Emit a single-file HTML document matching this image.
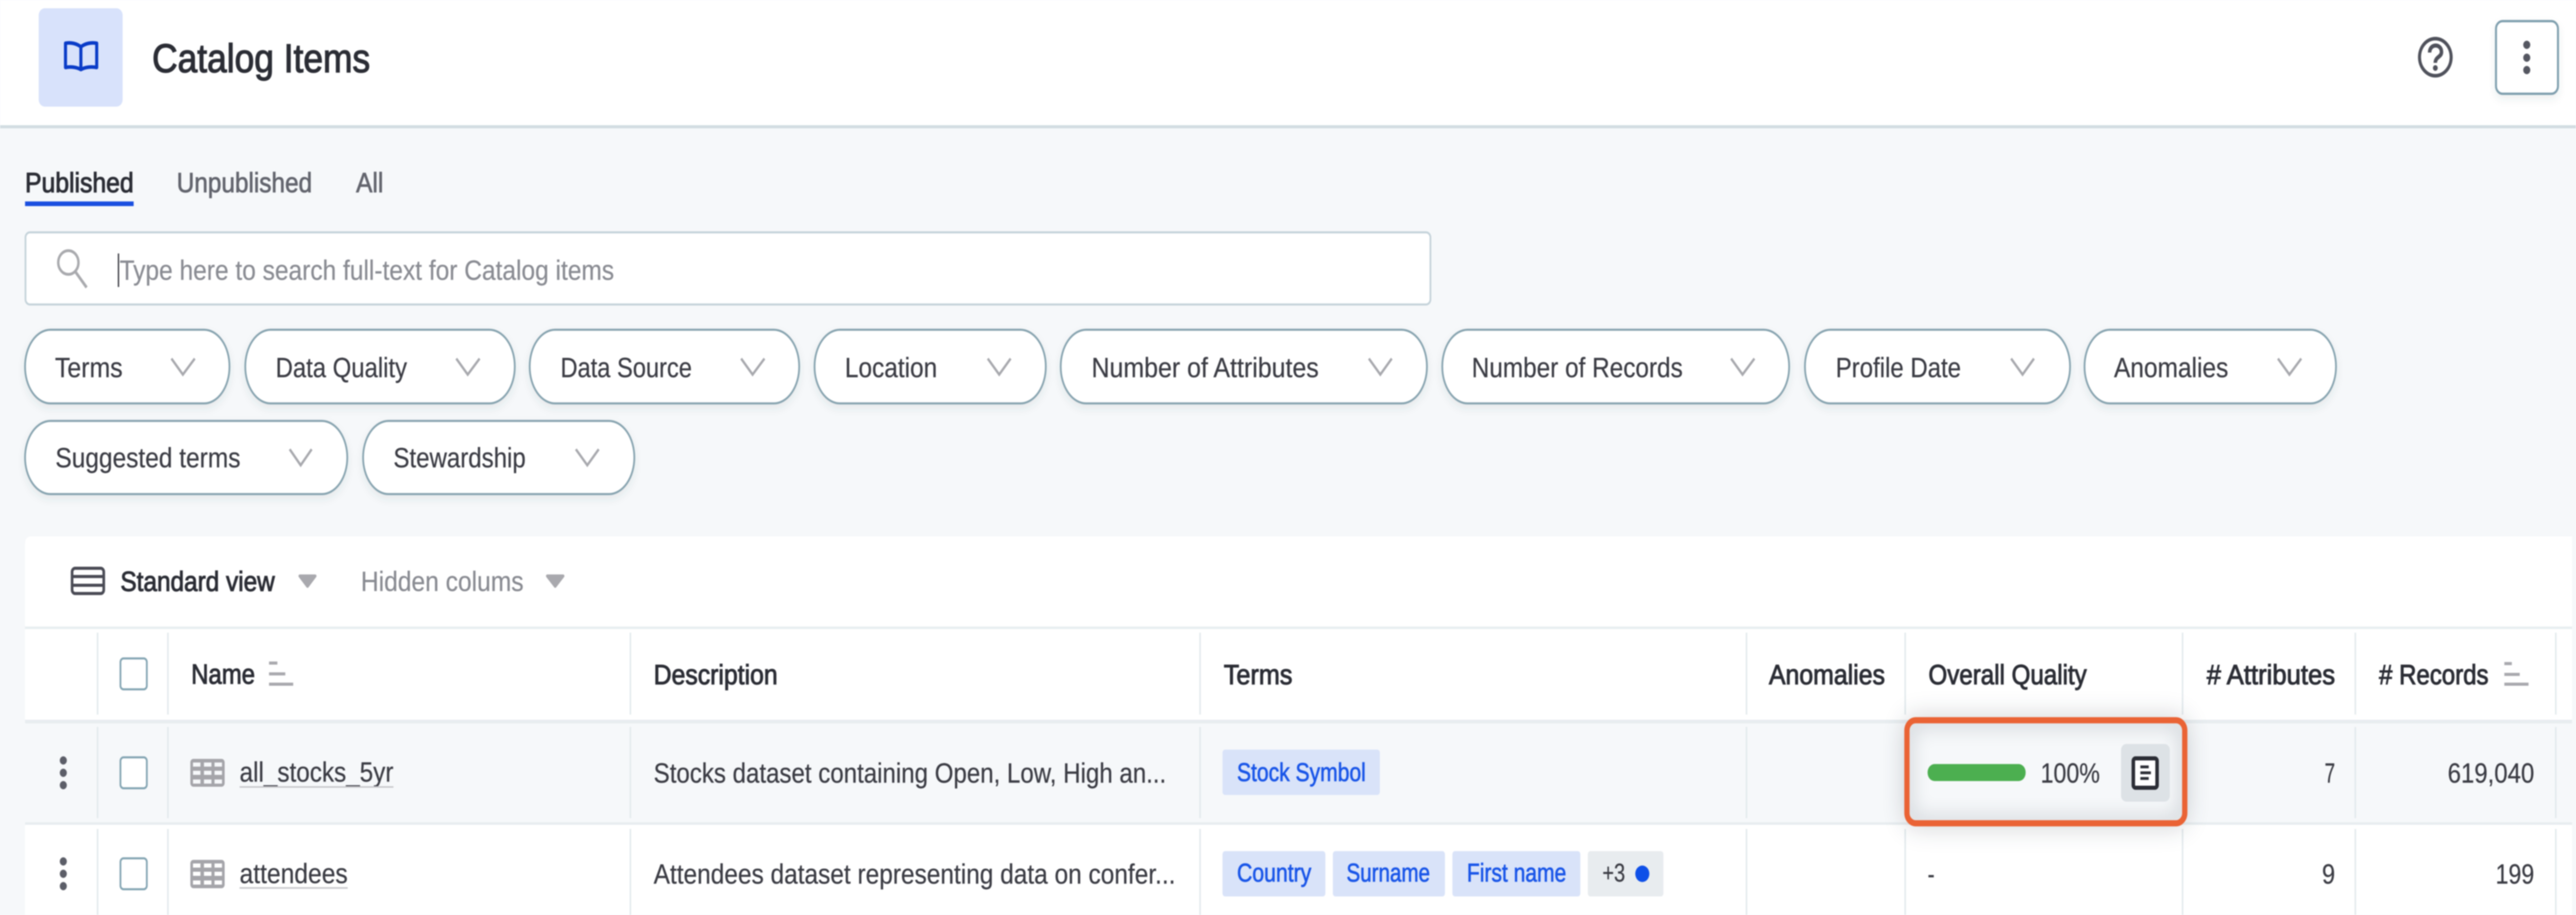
<!DOCTYPE html>
<html lang="en">
<head>
<meta charset="utf-8">
<title>Catalog Items</title>
<style>
html,body{margin:0;padding:0;background:#f6f8fa;width:100%;height:100%;overflow:hidden;}
svg#root{position:fixed;left:0;top:0;width:100vw;height:100vh;display:block;filter:blur(1px);}
text{font-family:"Liberation Sans",sans-serif;font-size:54px;fill:#3b3c44;stroke:#3b3c44;stroke-width:.4px;text-rendering:geometricPrecision;}
.m{stroke:#2b2d35;stroke-width:1.6px;fill:#2b2d35;}
.g{fill:#63656e;stroke:#63656e;stroke-width:1.2px;}
.c{font-size:50px;fill:#1a56e8;stroke:#1a56e8;stroke-width:1.1px;}
.p{fill:#fff;stroke:#88a4b0;stroke-width:4;}
.v{fill:none;stroke:#a8a9ae;stroke-width:5;}
.s{stroke:#e3eaed;stroke-width:3.5;}
.b{fill:#a9a9ae;}
</style>
</head>
<body>
<svg id="root" viewBox="0 0 5860 1776" preserveAspectRatio="none" xmlns="http://www.w3.org/2000/svg">
<defs>
<filter id="sh" x="-10%" y="-30%" width="120%" height="170%"><feDropShadow dx="0" dy="8" stdDeviation="8" flood-color="#3a4a55" flood-opacity=".09"/></filter>
<filter id="bl" x="-30%" y="-60%" width="160%" height="220%"><feGaussianBlur stdDeviation="26"/></filter>
<filter id="bi" x="-30%" y="-60%" width="160%" height="220%"><feGaussianBlur stdDeviation="20"/></filter>
<clipPath id="inner"><rect x="4344" y="1404" width="620" height="188" rx="14"/></clipPath>
</defs>
<rect x="0" y="0" width="5860" height="1776" fill="#f6f8fa"/>
<!-- header -->
<rect x="0" y="0" width="5860" height="243" fill="#fff"/>
<rect x="0" y="243" width="5860" height="6" fill="#d2dde2"/>
<rect x="88" y="16" width="191" height="191" rx="14" fill="#d8e2fb"/>
<path d="M184 91C174 84 160 82 149 84V131C160 129 174 130 184 135C194 130 208 129 220 131V84C208 82 194 84 184 91ZM184 91V135" fill="none" stroke="#0a3cc8" stroke-width="7" stroke-linejoin="round"/>
<text x="346" y="140" textLength="496" lengthAdjust="spacingAndGlyphs" class="m" style="font-size:78px;stroke-width:2px">Catalog Items</text>
<circle cx="5540" cy="111" r="36" fill="none" stroke="#50525c" stroke-width="7"/>
<path d="M5527 102C5527 84 5554 84 5554 101C5554 111 5540 110 5540 122" fill="none" stroke="#50525c" stroke-width="8"/>
<circle cx="5540" cy="132" r="5.5" fill="#50525c"/>
<rect x="5678" y="41" width="141" height="141" rx="15" fill="#fff" stroke="#7f9fae" stroke-width="4.5" filter="url(#sh)"/>
<circle cx="5748" cy="87" r="8" fill="#555761"/><circle cx="5748" cy="112" r="8" fill="#555761"/><circle cx="5748" cy="136" r="8" fill="#555761"/>
<!-- tabs -->
<text x="57" y="373" textLength="247" lengthAdjust="spacingAndGlyphs" class="m">Published</text>
<rect x="57" y="391" width="247" height="9" fill="#1a4fe0"/>
<text x="402" y="373" textLength="308" lengthAdjust="spacingAndGlyphs" class="g">Unpublished</text>
<text x="810" y="373" textLength="62" lengthAdjust="spacingAndGlyphs" class="g">All</text>
<!-- search -->
<rect x="58" y="451" width="3196" height="140" rx="10" fill="#fff" stroke="#c5d3da" stroke-width="4"/>
<circle cx="155.500" cy="509.500" r="23" fill="none" stroke="#a9aaae" stroke-width="5.500"/>
<path d="M172 528L197 558" stroke="#a9aaae" stroke-width="6" fill="none"/>
<rect x="268" y="492" width="3" height="65" fill="#33343c"/>
<text x="272" y="543" textLength="1125" lengthAdjust="spacingAndGlyphs" style="fill:#8a8c93;stroke:#8a8c93">Type here to search full-text for Catalog items</text>
<!-- pills -->
<g filter="url(#sh)">
<rect class="p" x="57" y="640" width="465" height="143" rx="58" ry="71"/>
<rect class="p" x="558" y="640" width="613" height="143" rx="58" ry="71"/>
<rect class="p" x="1205" y="640" width="613" height="143" rx="58" ry="71"/>
<rect class="p" x="1853" y="640" width="526" height="143" rx="58" ry="71"/>
<rect class="p" x="2413" y="640" width="833" height="143" rx="58" ry="71"/>
<rect class="p" x="3281" y="640" width="789" height="143" rx="58" ry="71"/>
<rect class="p" x="4106" y="640" width="603" height="143" rx="58" ry="71"/>
<rect class="p" x="4742" y="640" width="572" height="143" rx="58" ry="71"/>
<rect class="p" x="57" y="817" width="733" height="142" rx="58" ry="71"/>
<rect class="p" x="826" y="817" width="617" height="142" rx="58" ry="71"/>
</g>
<text x="125" y="732" textLength="154" lengthAdjust="spacingAndGlyphs">Terms</text>
<text x="627" y="732" textLength="299" lengthAdjust="spacingAndGlyphs">Data Quality</text>
<text x="1275" y="732" textLength="299" lengthAdjust="spacingAndGlyphs">Data Source</text>
<text x="1922" y="732" textLength="210" lengthAdjust="spacingAndGlyphs">Location</text>
<text x="2483" y="732" textLength="517" lengthAdjust="spacingAndGlyphs">Number of Attributes</text>
<text x="3348" y="732" textLength="480" lengthAdjust="spacingAndGlyphs">Number of Records</text>
<text x="4176" y="732" textLength="285" lengthAdjust="spacingAndGlyphs">Profile Date</text>
<text x="4809" y="732" textLength="260" lengthAdjust="spacingAndGlyphs">Anomalies</text>
<text x="126" y="907" textLength="421" lengthAdjust="spacingAndGlyphs">Suggested terms</text>
<text x="895" y="907" textLength="301" lengthAdjust="spacingAndGlyphs">Stewardship</text>
<polyline class="v" points="390,696 416,727 443,696"/>
<polyline class="v" points="1038,696 1064,727 1091,696"/>
<polyline class="v" points="1686,696 1712,727 1739,696"/>
<polyline class="v" points="2247,696 2273,727 2299,696"/>
<polyline class="v" points="3114,696 3140,727 3166,696"/>
<polyline class="v" points="3938,696 3964,727 3991,696"/>
<polyline class="v" points="4575,696 4601,727 4627,696"/>
<polyline class="v" points="5182,696 5208,727 5235,696"/>
<polyline class="v" points="659,872 684,903 709,872"/>
<polyline class="v" points="1310,872 1336,903 1362,872"/>
<!-- card -->
<path d="M57 1776V1056Q57 1041 72 1041H5851V1776Z" fill="#fff"/>
<rect x="164" y="1103" width="72" height="49" rx="7" fill="none" stroke="#4a4b55" stroke-width="6"/>
<path d="M164 1119H236M164 1136H236" stroke="#4a4b55" stroke-width="6"/>
<text x="274" y="1147" textLength="351" lengthAdjust="spacingAndGlyphs" class="m">Standard view</text>
<path d="M682 1118H717L699.500 1138Z" fill="#a9a9ae" stroke="#a9a9ae" stroke-width="6" stroke-linejoin="round"/>
<text x="821" y="1147" textLength="370" lengthAdjust="spacingAndGlyphs" style="fill:#898b92;stroke:#898b92">Hidden colums</text>
<path d="M1245 1118H1281L1263 1138Z" fill="#a9a9ae" stroke="#a9a9ae" stroke-width="6" stroke-linejoin="round"/>
<rect x="57" y="1216" width="5794" height="5" fill="#e8eef1"/>
<rect x="57" y="1404" width="5794" height="192" fill="#f6f8fa"/>
<rect x="57" y="1397" width="5794" height="7" fill="#e8edf0"/>
<rect x="57" y="1596" width="5794" height="5" fill="#e8edf0"/>
<!-- separators -->
<g class="s">
<path d="M222 1228V1387M382 1228V1387M1434 1228V1387M2730 1228V1387M3973 1228V1387M4334 1228V1387M4965 1228V1387M5358 1228V1387M5814 1228V1387"/>
<path d="M222 1411V1588M382 1411V1588M1434 1411V1588M2730 1411V1588M3973 1411V1588M5358 1411V1588M5814 1411V1588"/>
<path d="M222 1609V1776M382 1609V1776M1434 1609V1776M2730 1609V1776M3973 1609V1776M4334 1609V1776M4965 1609V1776M5358 1609V1776M5814 1609V1776"/>
</g>
<!-- table header -->
<rect x="274" y="1278" width="60" height="60" rx="7" fill="#fff" stroke="#84a5b3" stroke-width="4"/>
<text x="435" y="1327" textLength="145" lengthAdjust="spacingAndGlyphs" class="m">Name</text>
<rect class="b" x="612" y="1284" width="19" height="6"/><rect class="b" x="612" y="1305" width="37" height="6"/><rect class="b" x="612" y="1325" width="55" height="6"/>
<text x="1487" y="1328" textLength="282" lengthAdjust="spacingAndGlyphs" class="m">Description</text>
<text x="2784" y="1328" textLength="156" lengthAdjust="spacingAndGlyphs" class="m">Terms</text>
<text x="4024" y="1328" textLength="264" lengthAdjust="spacingAndGlyphs" class="m">Anomalies</text>
<text x="5020" y="1328" textLength="292" lengthAdjust="spacingAndGlyphs" class="m"># Attributes</text>
<text x="5412" y="1328" textLength="249" lengthAdjust="spacingAndGlyphs" class="m"># Records</text>
<rect class="b" x="5697" y="1285" width="17" height="6"/><rect class="b" x="5697" y="1306" width="35" height="6"/><rect class="b" x="5697" y="1325" width="55" height="6"/>
<!-- row 1 -->
<circle cx="144" cy="1476" r="8" fill="#5c5e68"/><circle cx="144" cy="1500" r="8" fill="#5c5e68"/><circle cx="144" cy="1524" r="8" fill="#5c5e68"/>
<rect x="274" y="1470" width="60" height="60" rx="7" fill="#fff" stroke="#84a5b3" stroke-width="4"/>
<rect x="433" y="1473" width="78" height="54" rx="7" fill="#a5a5aa"/>
<path d="M439 1480h17v8h-17zM464 1480h17v8h-17zM488 1480h17v8h-17zM439 1496h17v8h-17zM464 1496h17v8h-17zM488 1496h17v8h-17zM439 1513h17v8h-17zM464 1513h17v8h-17zM488 1513h17v8h-17z" fill="#f6f8fa"/>
<text x="545" y="1517" textLength="350" lengthAdjust="spacingAndGlyphs">all_stocks_5yr</text>
<rect x="545" y="1526" width="350" height="3" fill="#c8c8cc"/>
<text x="1487" y="1519" textLength="1166" lengthAdjust="spacingAndGlyphs">Stocks dataset containing Open, Low, High an...</text>
<rect x="2781" y="1455" width="358" height="88" rx="6" fill="#d9e3f9"/>
<text x="2814" y="1516" textLength="293" lengthAdjust="spacingAndGlyphs" class="c">Stock Symbol</text>
<!-- row 2 -->
<circle cx="144" cy="1672" r="8" fill="#5c5e68"/><circle cx="144" cy="1696" r="8" fill="#5c5e68"/><circle cx="144" cy="1720" r="8" fill="#5c5e68"/>
<rect x="274" y="1666" width="60" height="60" rx="7" fill="#fff" stroke="#84a5b3" stroke-width="4"/>
<rect x="433" y="1669" width="78" height="55" rx="7" fill="#a5a5aa"/>
<path d="M439 1676h17v8h-17zM464 1676h17v8h-17zM488 1676h17v8h-17zM439 1692h17v8h-17zM464 1692h17v8h-17zM488 1692h17v8h-17zM439 1709h17v8h-17zM464 1709h17v8h-17zM488 1709h17v8h-17z" fill="#fff"/>
<text x="545" y="1714" textLength="246" lengthAdjust="spacingAndGlyphs">attendees</text>
<rect x="545" y="1722" width="246" height="3" fill="#c8c8cc"/>
<text x="1487" y="1715" textLength="1187" lengthAdjust="spacingAndGlyphs">Attendees dataset representing data on confer...</text>
<rect x="2781" y="1652" width="234" height="88" rx="6" fill="#d9e3f9"/>
<text x="2814" y="1711" textLength="169" lengthAdjust="spacingAndGlyphs" class="c">Country</text>
<rect x="3032" y="1652" width="255" height="88" rx="6" fill="#d9e3f9"/>
<text x="3063" y="1711" textLength="190" lengthAdjust="spacingAndGlyphs" class="c">Surname</text>
<rect x="3304" y="1652" width="291" height="88" rx="6" fill="#d9e3f9"/>
<text x="3337" y="1711" textLength="226" lengthAdjust="spacingAndGlyphs" class="c">First name</text>
<rect x="3612" y="1652" width="172" height="88" rx="6" fill="#e8ecef"/>
<text x="3645" y="1711" textLength="52" lengthAdjust="spacingAndGlyphs" style="font-size:50px">+3</text>
<circle cx="3736" cy="1696" r="16" fill="#0f50e8"/>
<text x="5282" y="1715" textLength="30" lengthAdjust="spacingAndGlyphs">9</text>
<text x="5677" y="1715" textLength="88" lengthAdjust="spacingAndGlyphs">199</text>
<!-- highlighted quality cell -->
<rect x="4332" y="1392" width="644" height="212" rx="26" fill="#1e2832" opacity=".2" filter="url(#bl)"/>
<text x="4387" y="1328" textLength="360" lengthAdjust="spacingAndGlyphs" class="m">Overall Quality</text>
<text x="4385" y="1715" textLength="16" lengthAdjust="spacingAndGlyphs">-</text>
<rect x="4338" y="1398" width="632" height="200" rx="20" fill="#f6f8fa"/>
<g clip-path="url(#inner)">
<rect x="4338" y="1398" width="632" height="200" rx="20" fill="none" stroke="#1e2832" stroke-width="26" opacity=".17" filter="url(#bi)"/>
</g>
<rect x="4338" y="1398" width="632" height="200" rx="20" fill="none" stroke="#ea6335" stroke-width="12"/>
<rect x="4385" y="1483" width="223" height="33" rx="16" fill="#4caf50"/>
<text x="4642" y="1519" textLength="135" lengthAdjust="spacingAndGlyphs">100%</text>
<rect x="4825" y="1444" width="111" height="112" rx="12" fill="#dde2e6"/>
<rect x="4853" y="1472" width="54" height="57" rx="5" fill="#fff" stroke="#2b2d35" stroke-width="8"/>
<path d="M4869 1488.500H4888M4869 1500H4893M4869 1511H4888" stroke="#2b2d35" stroke-width="5.500"/>
<text x="5288" y="1519" textLength="24" lengthAdjust="spacingAndGlyphs">7</text>
<text x="5568" y="1519" textLength="197" lengthAdjust="spacingAndGlyphs">619,040</text>
</svg>
</body>
</html>
